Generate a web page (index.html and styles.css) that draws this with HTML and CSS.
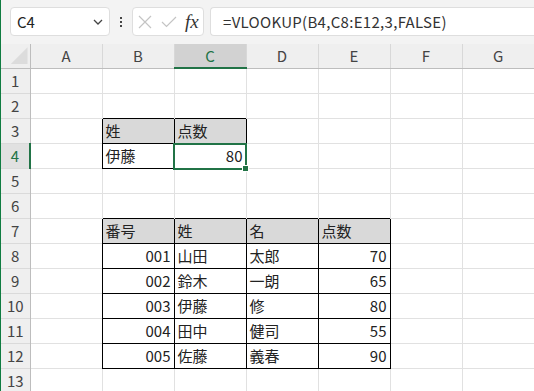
FILE: index.html
```html
<!DOCTYPE html>
<html lang="ja">
<head>
    <meta charset="UTF-8">
    <title>Sheet1 - VLOOKUP</title>
    <link rel="stylesheet" href="styles.css">
</head>
<body>
    <div class="app">
        <div class="toolbar">
            <div class="namebox">
                <span>C4</span>
                <svg class="chevron" width="10" height="6" viewBox="0 0 10 6"><path d="M1 1 L5 5 L9 1" fill="none" stroke="#444" stroke-width="1.3"/></svg>
            </div>
            <div class="more">
                <span></span><span></span><span></span>
            </div>
            <div class="fxbox">
                <svg width="14" height="14" viewBox="0 0 14 14"><path d="M1 1 L13 13 M13 1 L1 13" stroke="#c4c4c4" stroke-width="1.2"/></svg>
                <svg width="16" height="12" viewBox="0 0 16 12"><path d="M1 6 L5.5 10.5 L15 1" fill="none" stroke="#c4c4c4" stroke-width="1.2"/></svg>
                <span class="fx">fx</span>
            </div>
            <div class="formula">=VLOOKUP(B4,C8:E12,3,FALSE)</div>
        </div>

        <table class="sheet">
            <colgroup>
                <col class="col-rh">
                <col><col><col><col><col><col><col>
            </colgroup>
            <tr class="head">
                <th class="corner"><div class="tri"></div></th>
                <th>A</th><th>B</th><th class="sel">C</th><th>D</th><th>E</th><th>F</th><th>G</th>
            </tr>
            <tr>
                <td class="rh">1</td><td></td><td></td><td></td><td></td><td></td><td></td><td></td>
            </tr>
            <tr>
                <td class="rh">2</td><td></td><td></td><td></td><td></td><td></td><td></td><td></td>
            </tr>
            <tr>
                <td class="rh">3</td><td></td><td class="t th">姓</td><td class="t th">点数</td><td></td><td></td><td></td><td></td>
            </tr>
            <tr>
                <td class="rh sel">4</td><td></td><td class="t">伊藤</td><td class="t num active">80</td><td></td><td></td><td></td><td></td>
            </tr>
            <tr>
                <td class="rh">5</td><td></td><td></td><td></td><td></td><td></td><td></td><td></td>
            </tr>
            <tr>
                <td class="rh">6</td><td></td><td></td><td></td><td></td><td></td><td></td><td></td>
            </tr>
            <tr>
                <td class="rh">7</td><td></td><td class="t th">番号</td><td class="t th">姓</td><td class="t th">名</td><td class="t th">点数</td><td></td><td></td>
            </tr>
            <tr>
                <td class="rh">8</td><td></td><td class="t num">001</td><td class="t">山田</td><td class="t">太郎</td><td class="t num">70</td><td></td><td></td>
            </tr>
            <tr>
                <td class="rh">9</td><td></td><td class="t num">002</td><td class="t">鈴木</td><td class="t">一朗</td><td class="t num">65</td><td></td><td></td>
            </tr>
            <tr>
                <td class="rh">10</td><td></td><td class="t num">003</td><td class="t">伊藤</td><td class="t">修</td><td class="t num">80</td><td></td><td></td>
            </tr>
            <tr>
                <td class="rh">11</td><td></td><td class="t num">004</td><td class="t">田中</td><td class="t">健司</td><td class="t num">55</td><td></td><td></td>
            </tr>
            <tr>
                <td class="rh">12</td><td></td><td class="t num">005</td><td class="t">佐藤</td><td class="t">義春</td><td class="t num">90</td><td></td><td></td>
            </tr>
            <tr>
                <td class="rh">13</td><td></td><td></td><td></td><td></td><td></td><td></td><td></td>
            </tr>
        </table>
    </div>
</body>
</html>
```

FILE: styles.css
```css
body {
    margin: 0;
    padding: 0;
    background-color: #fff;
    font-family: "Noto Sans CJK JP", "Noto Sans", sans-serif;
    color: #222;
}
.app {
    width: 533px;
    height: 391px;
    border-left: 1px solid #107c41;
    overflow: hidden;
}
.toolbar {
    height: 44px;
    background-color: #f3f3f3;
    display: flex;
    align-items: flex-start;
    padding-top: 7px;
    box-sizing: border-box;
}
.namebox {
    width: 100px;
    height: 29px;
    margin-left: 9px;
    box-sizing: border-box;
    background-color: #fff;
    border: 1px solid #dedede;
    border-radius: 4px;
    display: flex;
    align-items: center;
    justify-content: space-between;
    padding: 0 6px 0 6px;
    font-size: 15px;
}
.more {
    width: 22px;
    height: 29px;
    display: flex;
    flex-direction: column;
    align-items: center;
    justify-content: center;
    gap: 2px;
}
.more span {
    width: 2px;
    height: 2px;
    background-color: #444;
}
.fxbox {
    width: 72px;
    height: 29px;
    box-sizing: border-box;
    background-color: #fff;
    border: 1px solid #dedede;
    border-radius: 4px;
    display: flex;
    align-items: center;
    padding-left: 5px;
    gap: 9px;
}
.fx {
    font-family: "Liberation Serif", serif;
    font-style: italic;
    font-size: 19px;
    color: #333;
    margin-left: -1px;
}
.formula {
    flex: 1;
    height: 29px;
    margin-left: 6px;
    box-sizing: border-box;
    background-color: #fff;
    border: 1px solid #dedede;
    border-right: none;
    border-radius: 4px 0 0 4px;
    padding-left: 12px;
    font-size: 15px;
    letter-spacing: 0.3px;
    line-height: 27px;
    color: #333;
}
.sheet {
    width: 533px;
    table-layout: fixed;
    border-collapse: collapse;
    font-size: 15px;
}
.sheet col {
    width: 72px;
}
.sheet col.col-rh {
    width: 29px;
}
.head th {
    height: 23px;
    padding: 0;
    background-color: #efefef;
    border-left: 1px solid #d8d8d8;
    border-bottom: 1px solid #bdbdbd;
    font-weight: normal;
    color: #444;
    line-height: 20px;
}
.head th.sel {
    background-color: #d2d2d2;
    color: #217346;
    border-bottom: 2px solid #217346;
}
.head th.corner {
    border-left: none;
    border-right: 1px solid #bdbdbd;
}
.tri {
    width: 17px;
    height: 17px;
    margin: 0 2px 0 auto;
    background-color: #dcdcdc;
    clip-path: polygon(100% 0, 100% 100%, 0 100%);
}
.sheet td {
    height: 24px;
    padding: 0 3px;
    border-left: 1px solid #e1e1e1;
    border-top: 1px solid #e1e1e1;
    white-space: nowrap;
    overflow: hidden;
    line-height: 20px;
    color: #222;
}
.sheet td.rh {
    padding: 0;
    text-align: center;
    background-color: #efefef;
    color: #444;
    border-left: none;
    border-top: 1px solid #dadada;
    border-right: 1px solid #bdbdbd;
}
.sheet td.rh.sel {
    background-color: #e1e1e1;
    color: #217346;
    border-right: 2px solid #217346;
}
.sheet td.t {
    border: 1px solid #000;
}
.sheet td.th {
    background-color: #d9d9d9;
}
.sheet td.num {
    text-align: right;
}
.sheet td.active {
    position: relative;
    overflow: visible;
    outline: 2px solid #217346;
    outline-offset: -1px;
}
.sheet td.active::after {
    content: "";
    position: absolute;
    right: -3px;
    bottom: -4px;
    width: 5px;
    height: 5px;
    background-color: #217346;
    border: 1px solid #fff;
}
```
